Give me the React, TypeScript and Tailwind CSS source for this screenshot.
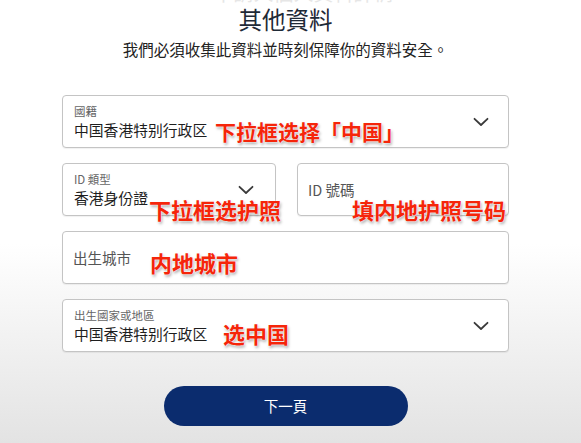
import React from "react";

const TC = { fontFamily: '"Noto Sans CJK TC", "Noto Sans", sans-serif' };
const SC = { fontFamily: '"Noto Sans CJK SC", "Noto Sans", sans-serif' };

function Chevron() {
  return (
    <svg width="16" height="10" viewBox="0 0 16 10" fill="none" className="shrink-0">
      <path d="M1.5 1.8 L8 8 L14.5 1.8" stroke="#3a3a3a" strokeWidth="1.8" strokeLinecap="round" strokeLinejoin="round" />
    </svg>
  );
}

function Note({ text, className }: { text: string; className: string }) {
  return (
    <span
      className={`absolute whitespace-nowrap font-bold leading-none text-[#f5250a] [text-shadow:0_0_1px_#fff,0_0_2px_#fff,1px_2px_3px_rgba(0,0,0,0.35)] ${className}`}
      style={SC}
    >
      {text}
    </span>
  );
}

function SelectField({
  label,
  value,
  chevronClass,
  children,
}: {
  label: string;
  value: string;
  chevronClass?: string;
  children?: React.ReactNode;
}) {
  return (
    <div className="relative flex h-[53px] items-center rounded-[4px] border border-[#c4c4c4] bg-white pl-[11px] pr-[19px] shadow-[0_1px_1px_rgba(0,0,0,0.06)]">
      <div className="flex flex-1 flex-col">
        <span className="text-[11.5px] leading-[14px] text-[#666]">{label}</span>
        <span className="mt-[3px] text-[14.8px] leading-[18px] text-[#1e1e1e]">{value}</span>
      </div>
      <div className={chevronClass}>
        <Chevron />
      </div>
      {children}
    </div>
  );
}

function InputField({ placeholder, children }: { placeholder: string; children?: React.ReactNode }) {
  return (
    <div className="relative flex h-[53px] items-center rounded-[4px] border border-[#c4c4c4] bg-white pl-[10px] shadow-[0_1px_1px_rgba(0,0,0,0.06)]">
      <span className="text-[14.5px] leading-[18px] text-[#555]">{placeholder}</span>
      {children}
    </div>
  );
}

export default function App() {
  return (
    <div className="min-h-[443px] w-full overflow-hidden bg-gradient-to-b from-white from-55% to-[#e3e3e3]" style={TC}>
      <div className="flex h-[4px] justify-center overflow-hidden">
        <span className="-mt-[17px] ml-[26px] text-[20px] leading-[20px] text-[#e6e6e6]">申請人個人資料詳情</span>
      </div>
      <div className="ml-[62px] w-[447px]">
        <h1 className="text-center text-[23.5px] font-normal leading-[31px] text-[#1f2a37]">其他資料</h1>
        <p className="mt-[4px] text-center text-[15.5px] leading-[20px] text-[#222]">
          我們必須收集此資料並時刻保障你的資料安全。
        </p>
        <div className="mt-[36px] flex flex-col gap-[15px]">
          <SelectField label="國籍" value="中国香港特别行政区">
            <Note text="下拉框选择「中国」" className="left-[152px] top-[25px] text-[21px]" />
          </SelectField>
          <div className="grid grid-cols-[214px_212px] gap-[21px]">
            <SelectField label="ID 類型" value="香港身份證" chevronClass="mr-[2px]">
              <Note text="下拉框选护照" className="left-[86px] top-[34px] text-[22px]" />
            </SelectField>
            <InputField placeholder="ID 號碼">
              <Note text="填内地护照号码" className="left-[54px] top-[34px] text-[22px]" />
            </InputField>
          </div>
          <InputField placeholder="出生城市">
            <Note text="内地城市" className="left-[87px] top-[19px] text-[22px]" />
          </InputField>
          <SelectField label="出生國家或地區" value="中国香港特别行政区">
            <Note text="选中国" className="left-[160px] top-[22px] text-[22px]" />
          </SelectField>
        </div>
        <div className="mt-[34px] flex justify-center">
          <button className="flex h-[40px] w-[244px] items-center justify-center rounded-full bg-[#0b2c6e] text-[14.5px] text-white">
            下一頁
          </button>
        </div>
      </div>
    </div>
  );
}
